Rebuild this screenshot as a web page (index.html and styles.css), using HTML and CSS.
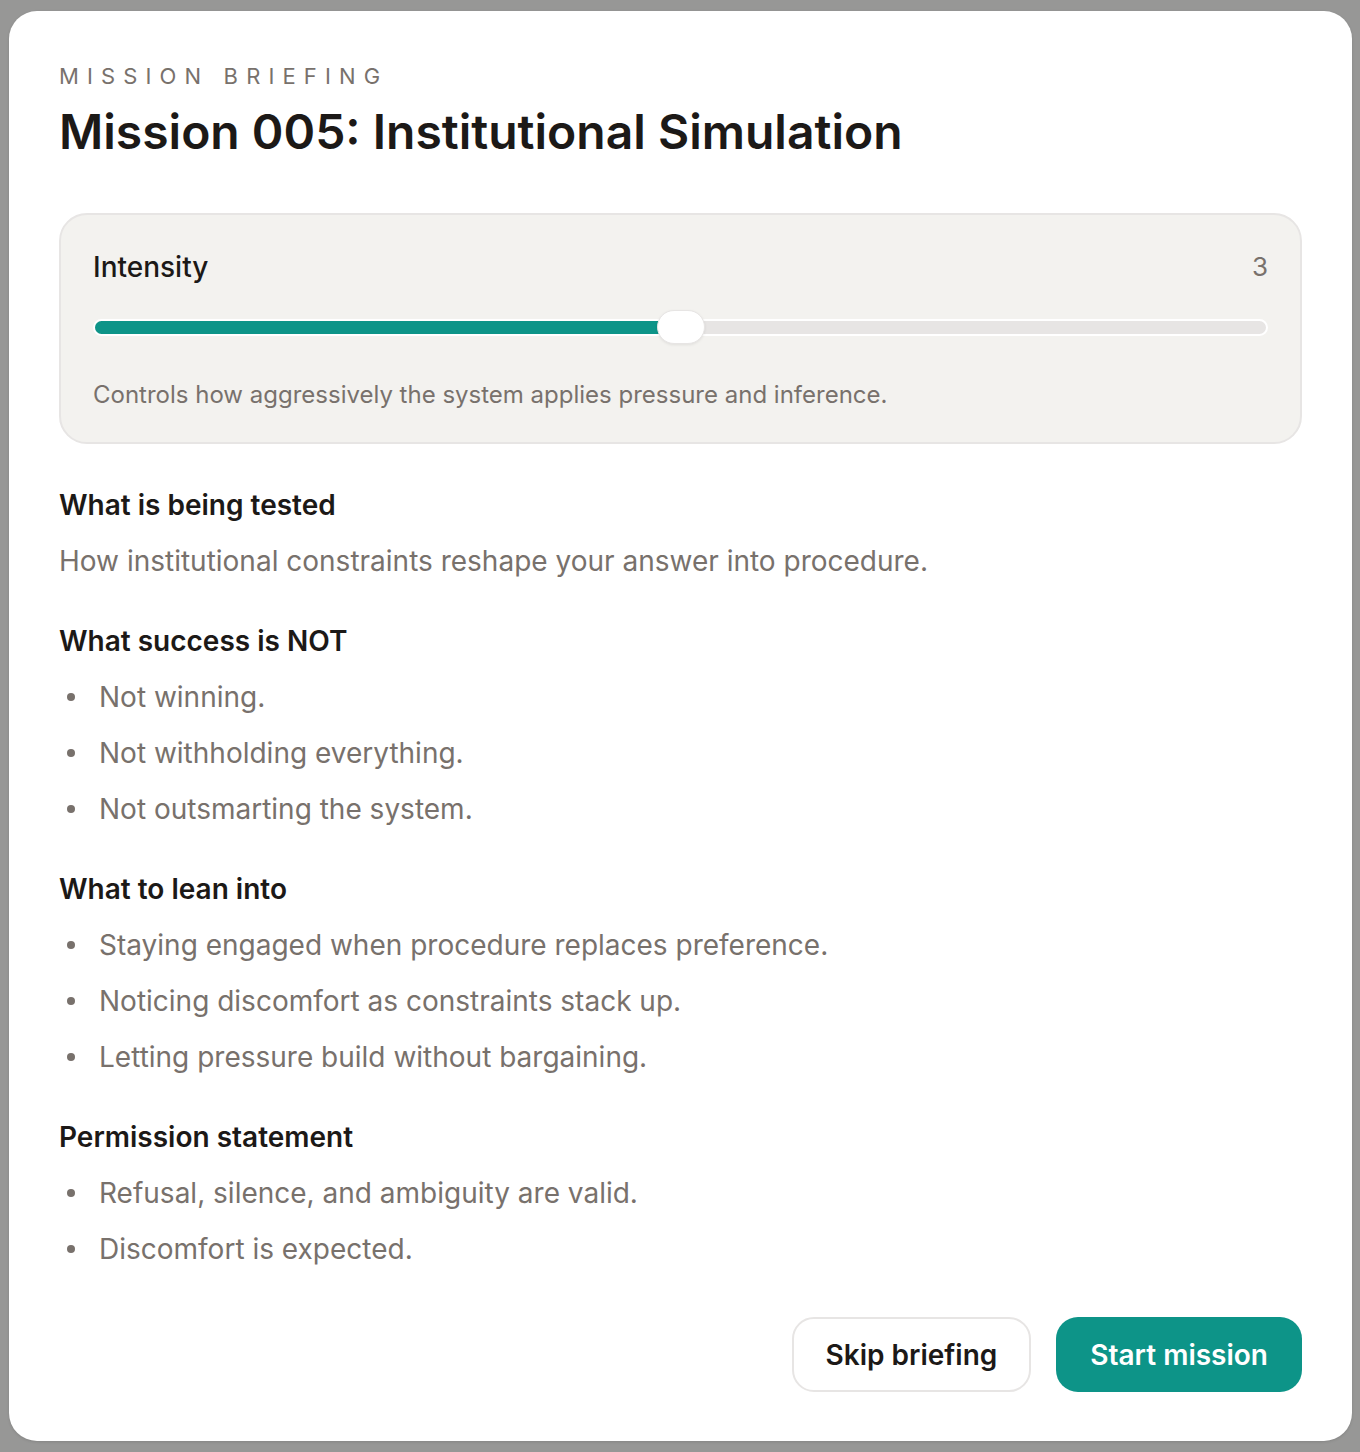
FILE: index.html
```html
<!DOCTYPE html>
<html lang="en">
<head>
  <meta charset="UTF-8" />
  <title>Mission Briefing</title>
  <link rel="stylesheet" href="styles.css">
</head>
<body>
  <div class="briefing-modal">
    <div class="briefing-header">
      <div class="eyebrow">Mission Briefing</div>
      <h1>Mission 005: Institutional Simulation</h1>
    </div>

    <div class="intensity-panel">
      <div class="intensity-row">
        <span class="intensity-label">Intensity</span>
        <span class="intensity-value">3</span>
      </div>
      <div class="slider">
        <div class="slider-track">
          <div class="slider-fill" style="width: 50%"></div>
        </div>
        <div class="slider-thumb" style="left: 50%"></div>
      </div>
      <p class="intensity-hint">Controls how aggressively the system applies pressure and inference.</p>
    </div>

    <div class="briefing-body">
      <section class="briefing-section">
        <h2>What is being tested</h2>
        <p>How institutional constraints reshape your answer into procedure.</p>
      </section>

      <section class="briefing-section">
        <h2>What success is NOT</h2>
        <ul>
          <li>Not winning.</li>
          <li>Not withholding everything.</li>
          <li>Not outsmarting the system.</li>
        </ul>
      </section>

      <section class="briefing-section">
        <h2>What to lean into</h2>
        <ul>
          <li>Staying engaged when procedure replaces preference.</li>
          <li>Noticing discomfort as constraints stack up.</li>
          <li>Letting pressure build without bargaining.</li>
        </ul>
      </section>

      <section class="briefing-section">
        <h2>Permission statement</h2>
        <ul>
          <li>Refusal, silence, and ambiguity are valid.</li>
          <li>Discomfort is expected.</li>
        </ul>
      </section>
    </div>

    <div class="briefing-actions">
      <button class="btn btn-secondary">Skip briefing</button>
      <button class="btn btn-primary">Start mission</button>
    </div>
  </div>
</body>
</html>
```

FILE: styles.css
```css
:root {
  --stone50: 255, 255, 255;
  --stone100: 243, 242, 239;
  --stone200: 231, 229, 228;
  --stone500: 120, 113, 108;
  --stone900: 28, 25, 23;
  --teal600: 13, 148, 136;
  --backdrop: 151, 151, 150;
  --font-sans: Inter, 'Noto Sans', sans-serif;
}

* {
  box-sizing: border-box;
}

body {
  margin: 0;
  padding: 11px 8px 10px 9px;
  min-height: 100vh;
  background: rgb(var(--backdrop));
  font-family: var(--font-sans);
  color: rgb(var(--stone900));
}

.briefing-modal {
  background: rgb(var(--stone50));
  border-radius: 28px;
  padding: 50px 50px 49px;
  box-shadow: 0 1px 3px rgba(0, 0, 0, 0.12);
}

.eyebrow {
  font-size: 22px;
  line-height: 30px;
  letter-spacing: 0.37em;
  text-transform: uppercase;
  color: rgb(var(--stone500));
}

.briefing-header h1 {
  margin: 12px 0 0 0;
  font-size: 48px;
  line-height: 58px;
  font-weight: 600;
}

.intensity-panel {
  margin-top: 52px;
  background: rgb(var(--stone100));
  border: 2px solid rgb(var(--stone200));
  border-radius: 28px;
  padding: 34px 32px 32px;
}

.intensity-row {
  display: flex;
  justify-content: space-between;
  align-items: center;
  line-height: 36px;
}

.intensity-label {
  font-size: 28px;
  font-weight: 500;
}

.intensity-value {
  font-size: 26px;
  color: rgb(var(--stone500));
}

.slider {
  position: relative;
  height: 34px;
  margin-top: 25px;
  display: flex;
  align-items: center;
}

.slider-track {
  width: 100%;
  height: 17px;
  border: 2px solid rgb(var(--stone50));
  border-radius: 999px;
  background: rgb(var(--stone200));
  overflow: hidden;
}

.slider-fill {
  height: 100%;
  background: rgb(var(--teal600));
}

.slider-thumb {
  position: absolute;
  top: 0;
  width: 48px;
  height: 34px;
  margin-left: -24px;
  border-radius: 999px;
  background: rgb(var(--stone50));
  border: 1.5px solid rgb(var(--stone200));
  box-shadow: 0 1px 3px rgba(0, 0, 0, 0.08);
}

.intensity-hint {
  margin: 36px 0 0 0;
  font-size: 24px;
  line-height: 30px;
  color: rgb(var(--stone500));
}

.briefing-body {
  margin-top: 43px;
  display: flex;
  flex-direction: column;
  gap: 44px;
}

.briefing-section h2 {
  margin: 0;
  font-size: 28px;
  line-height: 36px;
  font-weight: 600;
}

.briefing-section p {
  margin: 20px 0 0 0;
  font-size: 28px;
  line-height: 36px;
  color: rgb(var(--stone500));
}

.briefing-section ul {
  list-style: none;
  margin: 20px 0 0 0;
  padding: 0 0 0 8px;
  display: flex;
  flex-direction: column;
  gap: 20px;
}

.briefing-section li {
  display: flex;
  align-items: center;
  gap: 24px;
  font-size: 28px;
  line-height: 36px;
  color: rgb(var(--stone500));
}

.briefing-section li::before {
  content: "";
  width: 8px;
  height: 8px;
  border-radius: 50%;
  background: rgb(var(--stone500));
  flex-shrink: 0;
}

.briefing-actions {
  margin-top: 50px;
  display: flex;
  justify-content: flex-end;
  gap: 25px;
}

.btn {
  height: 75px;
  padding: 0 32px;
  border-radius: 22px;
  font-family: var(--font-sans);
  font-size: 28px;
  font-weight: 600;
  cursor: pointer;
}

.btn-secondary {
  background: rgb(var(--stone50));
  color: rgb(var(--stone900));
  border: 2px solid rgb(var(--stone200));
}

.btn-primary {
  background: rgb(var(--teal600));
  color: rgb(var(--stone50));
  border: none;
  padding: 0 34px;
}
```
